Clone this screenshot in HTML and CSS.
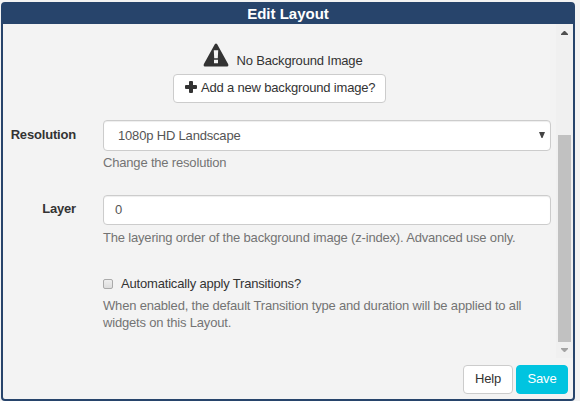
FILE: index.html
```html
<!DOCTYPE html>
<html lang="en">
<head>
<meta charset="utf-8">
<title>Edit Layout</title>
<link rel="stylesheet" href="styles.css">
</head>
<body>
<section class="dialog">
  <header class="title">Edit Layout</header>
  <div class="main">
    <form class="form">
      <div class="background">
        <div class="notice">
          <svg class="warning" width="26" height="24" viewBox="0 0 26 24"><path fill="#333" fill-rule="evenodd" d="M11.8 1.3Q13 -.2 14.2 1.3L25.1 21Q26 23.5 24 23.5H2Q0 23.5 .9 21ZM10.8 7.2L11.2 15.2H14.8L15.2 7.2ZM11 16.8V20.2H15V16.8Z"/></svg>
          <span>No Background Image</span>
        </div>
        <button class="btn add" type="button"><svg width="12" height="12" viewBox="0 0 12 12"><path fill="#333" d="M5 0H7Q8 0 8 1V4H11Q12 4 12 5V7Q12 8 11 8H8V11Q8 12 7 12H5Q4 12 4 11V8H1Q0 8 0 7V5Q0 4 1 4H4V1Q4 0 5 0Z"/></svg><span>Add a new background image?</span></button>
      </div>
      <div class="row resolution">
        <label class="label">Resolution</label>
        <div>
          <div class="control select"><span>1080p HD Landscape</span><svg width="6" height="6" viewBox="0 0 6 6"><path fill="#444" d="M0 0H6L3.5 6H2.5Z"/></svg></div>
          <p class="help">Change the resolution</p>
        </div>
      </div>
      <div class="row layer">
        <label class="label">Layer</label>
        <div>
          <div class="control">0</div>
          <p class="help">The layering order of the background image (z-index). Advanced use only.</p>
        </div>
      </div>
      <div class="transitions">
        <label class="check"><span class="box"></span>Automatically apply Transitions?</label>
        <p class="help">When enabled, the default Transition type and duration will be applied to all widgets on this Layout.</p>
      </div>
    </form>
    <div class="scrollbar">
      <svg class="arrow" width="7" height="4" viewBox="0 0 7 4"><path fill="#505050" d="M3 0H4L7 3V4H0V3Z"/></svg>
      <div class="thumb"></div>
      <svg class="arrow" width="7" height="4" viewBox="0 0 7 4"><path fill="#a3a3a3" d="M0 0H7V1L4 4H3L0 1Z"/></svg>
    </div>
  </div>
  <footer class="footer">
    <button class="btn" type="button">Help</button>
    <button class="btn save" type="button">Save</button>
  </footer>
</section>
</body>
</html>
```
FILE: styles.css
```css
* { box-sizing: border-box; }
body {
  margin: 0;
  padding: 2px 0 0 1px;
  height: 401px;
  overflow: hidden;
  background: #f3f3f3;
  color: #333;
  font: 13px/18px "Liberation Sans", Arial, sans-serif;
  letter-spacing: -.18px;
}
p { margin: 0; }
svg { display: block; flex: none; }
.dialog {
  display: flex;
  flex-direction: column;
  width: 574px;
  height: 399px;
  border: 2px solid #27446b;
  border-radius: 4px;
  background: #f3f3f3;
}
.title {
  height: 20px;
  background: #27446b;
  color: #fff;
  font-size: 15px;
  font-weight: bold;
  letter-spacing: 0;
  line-height: 20px;
  text-align: center;
}
.main { display: flex; height: 334px; }
.form { flex: 1; }
.background {
  display: flex;
  flex-direction: column;
  align-items: center;
  height: 96px;
  padding-top: 19px;
}
.notice { display: flex; gap: 8px; height: 31px; padding-left: 6px; }
.notice span { padding-top: 9px; }
.btn {
  width: 50px;
  height: 29px;
  padding: 0 0 2px;
  border: 1px solid #ccc;
  border-radius: 4px;
  background: #fff;
  color: #333;
  font: inherit;
  letter-spacing: inherit;
  white-space: nowrap;
}
.add {
  display: flex;
  align-items: center;
  gap: 4px;
  width: 213px;
  padding: 0 0 2px 11px;
}
.add svg { margin-top: -1px; }
.row { display: grid; grid-template-columns: 73px 448px; column-gap: 27px; height: 75px; }
.label { padding-top: 5px; font-weight: bold; text-align: right; }
.resolution .label { padding-top: 6px; }
.control {
  display: flex;
  align-items: center;
  height: 30px;
  padding: 0 11px;
  border: 1px solid #ccc;
  border-radius: 4px;
  background: #fff;
  color: #555;
  box-shadow: inset 0 1px 1px rgba(0, 0, 0, .07);
}
.select { justify-content: space-between; height: 31px; padding: 0 5px 0 14px; }
.select svg { margin-top: -2px; }
.help { margin-top: 3px; color: #737373; line-height: 17px; }
.layer .help { margin-top: 4px; }
.transitions { width: 448px; margin: 4px 0 0 100px; }
.check { display: flex; align-items: center; height: 19px; }
.transitions .help { margin-top: 4px; }
.box {
  width: 10px;
  height: 10px;
  margin-right: 8px;
  border: 1px solid #aaa;
  border-radius: 2px;
  background: linear-gradient(#eee, #ddd);
}
.scrollbar {
  display: flex;
  flex-direction: column;
  justify-content: space-between;
  align-items: center;
  width: 17px;
  padding: 7px 2px 6px;
  background: #f0f0f0;
}
.thumb { width: 13px; height: 207px; margin-top: 93px; background: #c1c1c1; }
.footer {
  display: flex;
  justify-content: flex-end;
  gap: 3px;
  padding: 7px 5px 0 0;
}
.save { width: 52px; border-color: #00c4e0; background: #00c4e0; color: #fff; }
```
